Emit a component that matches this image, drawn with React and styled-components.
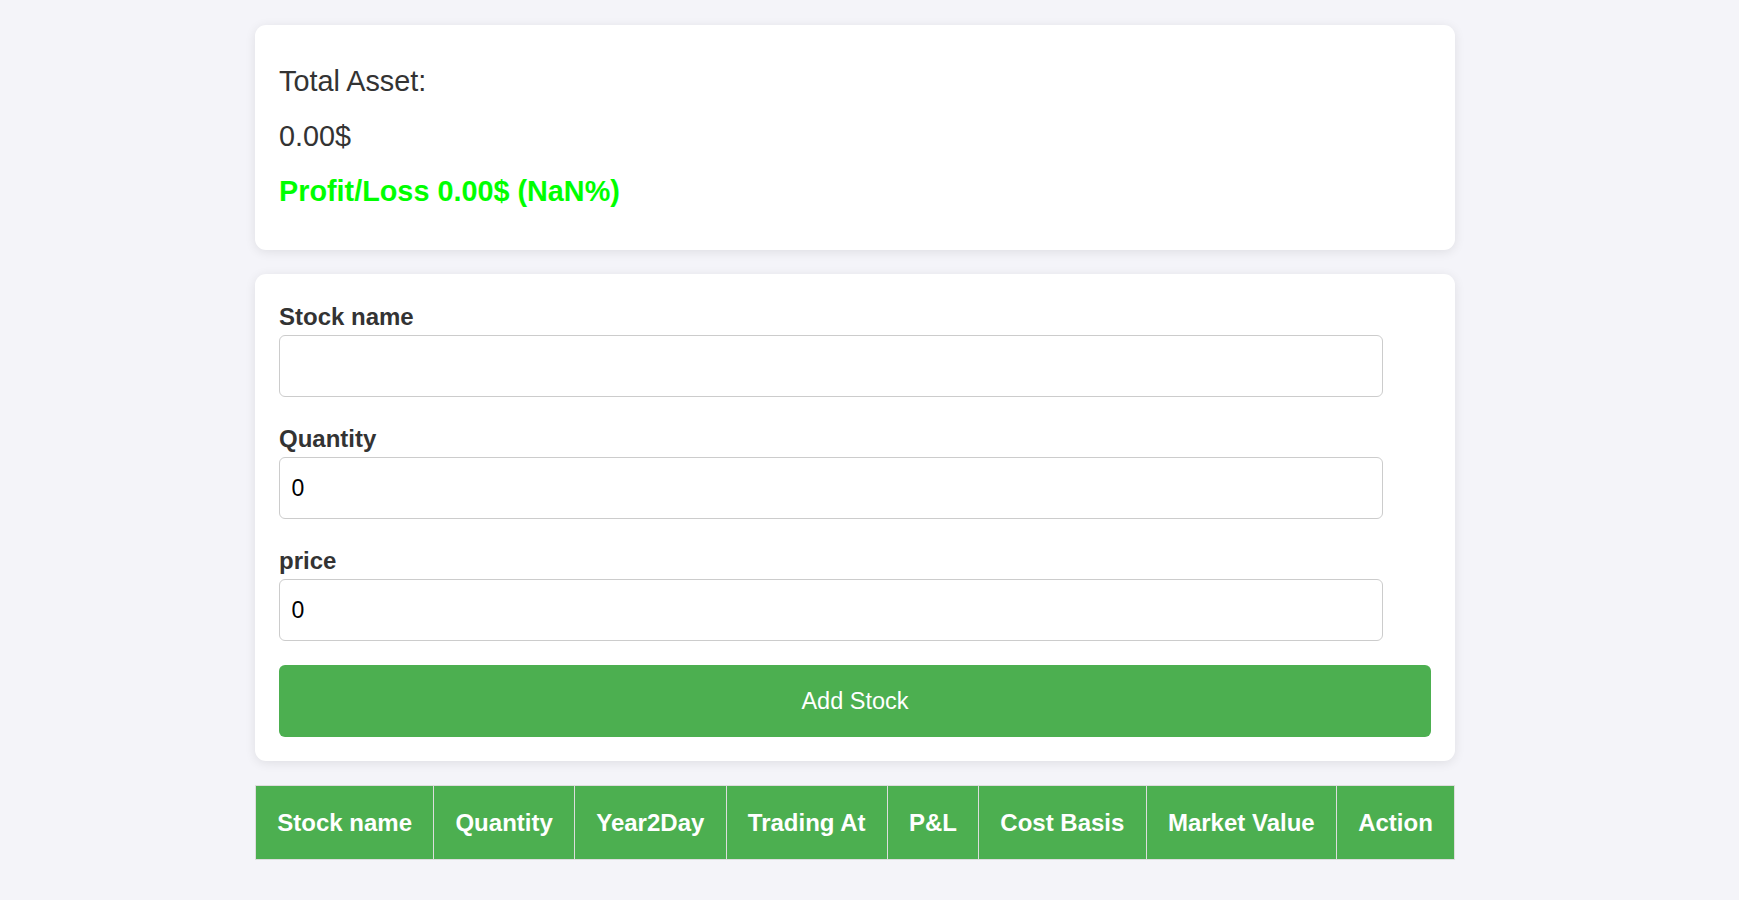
import React, { useState } from "react";
import styled, { createGlobalStyle } from "styled-components";

const GlobalStyle = createGlobalStyle`
  body {
    margin: 0;
    background: #f4f4f9;
    font-family: "Liberation Sans", Arial, sans-serif;
    color: #333;
  }
`;

const Page = styled.div`
  display: flex;
  justify-content: center;
  padding: 25px 29px 40px 0;
`;

const Container = styled.div`
  width: 1200px;
  display: flex;
  flex-direction: column;
  gap: 24px;
`;

const Card = styled.div`
  background: #fff;
  border-radius: 11px;
  box-shadow: 0 2px 11px rgba(0, 0, 0, 0.09);
  display: flex;
  flex-direction: column;
  padding: ${(p) => p.$pad || "24px"};
  gap: ${(p) => p.$gap || "0"};
`;

const Line = styled.div`
  font-size: 28.8px;
  line-height: 33px;
  font-weight: ${(p) => (p.$bold ? 700 : 400)};
  color: ${(p) => p.$color || "#333"};
`;

const Label = styled.label`
  display: block;
  font-size: 24px;
  line-height: 27px;
  font-weight: 700;
  color: #333;
  margin: 5px 0;
`;

const Input = styled.input`
  display: block;
  box-sizing: border-box;
  width: calc(100% - 48px);
  height: 62px;
  padding: 0 11.5px;
  margin: 0 0 23px;
  border: 1px solid #ccc;
  border-radius: 6px;
  font-family: "Liberation Sans", Arial, sans-serif;
  font-size: 23px;
  color: #000;
  outline: none;
`;

const Button = styled.button`
  display: block;
  width: 100%;
  height: 72px;
  margin-top: 1px;
  border: none;
  border-radius: 6px;
  background: #4caf50;
  color: #fff;
  font-family: "Liberation Sans", Arial, sans-serif;
  font-size: 23.5px;
  cursor: pointer;
`;

const Table = styled.table`
  width: 100%;
  border-collapse: collapse;
`;

const Th = styled.th`
  background: #4caf50;
  color: #fff;
  font-size: 24px;
  line-height: 27px;
  font-weight: 700;
  padding: 23px 21px;
  border: 1px solid #ddd;
  text-align: center;
  white-space: nowrap;
`;

const columns = [
  "Stock name",
  "Quantity",
  "Year2Day",
  "Trading At",
  "P&L",
  "Cost Basis",
  "Market Value",
  "Action",
];

export default function App() {
  const [name, setName] = useState("");
  const [qty, setQty] = useState(0);
  const [price, setPrice] = useState(0);

  return (
    <>
      <GlobalStyle />
      <Page>
        <Container>
          <Card $pad="40px 24px 42px" $gap="22px">
            <Line>Total Asset:</Line>
            <Line>0.00$</Line>
            <Line $bold $color="#00ff00">
              Profit/Loss 0.00$ (NaN%)
            </Line>
          </Card>

          <Card>
            <Label>Stock name</Label>
            <Input value={name} onChange={(e) => setName(e.target.value)} />
            <Label>Quantity</Label>
            <Input
              type="text"
              value={qty}
              onChange={(e) => setQty(e.target.value)}
            />
            <Label>price</Label>
            <Input
              type="text"
              value={price}
              onChange={(e) => setPrice(e.target.value)}
            />
            <Button>Add Stock</Button>
          </Card>

          <Table>
            <thead>
              <tr>
                {columns.map((c) => (
                  <Th key={c}>{c}</Th>
                ))}
              </tr>
            </thead>
          </Table>
        </Container>
      </Page>
    </>
  );
}
